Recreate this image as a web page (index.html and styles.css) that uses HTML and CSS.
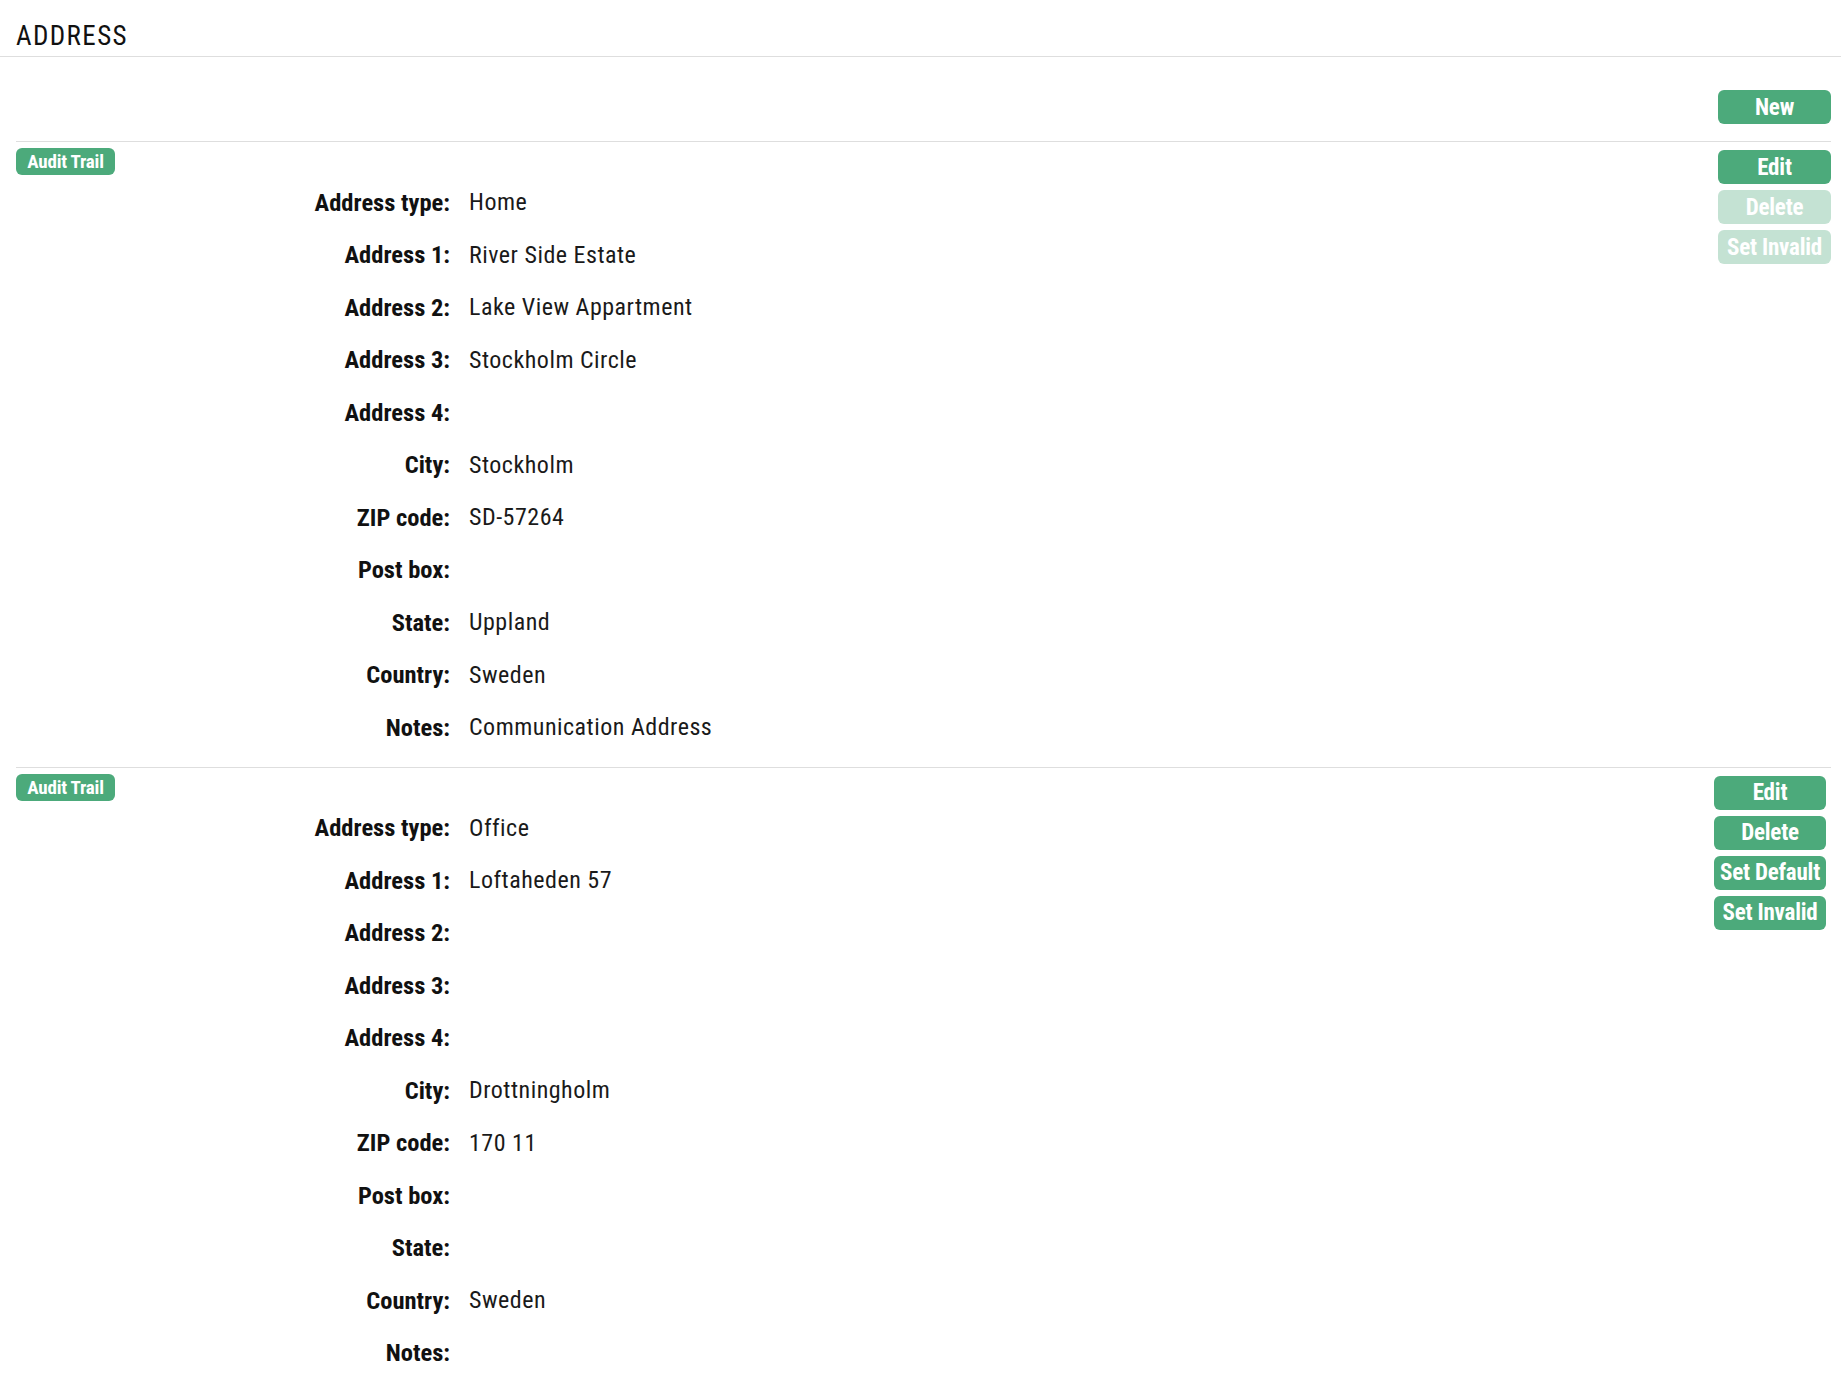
FILE: index.html
```html
<!DOCTYPE html>
<html lang="en">
<head>
    <meta charset="UTF-8">
    <meta name="viewport" content="width=device-width, initial-scale=1.0">
    <title>Address</title>
    <link rel="stylesheet" href="styles.css">
</head>
<body>
    <header class="page-head">
        <h1>ADDRESS</h1>
    </header>

    <div class="container">
        <div class="toolbar">
            <button type="button" class="btn">New</button>
        </div>

        <!-- Default address -->
        <section class="address">
            <div class="address-main">
                <button type="button" class="btn btn-small">Audit Trail</button>
                <dl class="fields">
                    <dt>Address type:</dt><dd>Home</dd>
                    <dt>Address 1:</dt><dd>River Side Estate</dd>
                    <dt>Address 2:</dt><dd>Lake View Appartment</dd>
                    <dt>Address 3:</dt><dd>Stockholm Circle</dd>
                    <dt>Address 4:</dt><dd></dd>
                    <dt>City:</dt><dd>Stockholm</dd>
                    <dt>ZIP code:</dt><dd>SD-57264</dd>
                    <dt>Post box:</dt><dd></dd>
                    <dt>State:</dt><dd>Uppland</dd>
                    <dt>Country:</dt><dd>Sweden</dd>
                    <dt>Notes:</dt><dd>Communication Address</dd>
                </dl>
            </div>
            <div class="actions">
                <button type="button" class="btn">Edit</button>
                <button type="button" class="btn" disabled>Delete</button>
                <button type="button" class="btn" disabled>Set Invalid</button>
            </div>
        </section>

        <section class="address">
            <div class="address-main">
                <button type="button" class="btn btn-small">Audit Trail</button>
                <dl class="fields">
                    <dt>Address type:</dt><dd>Office</dd>
                    <dt>Address 1:</dt><dd>Loftaheden 57</dd>
                    <dt>Address 2:</dt><dd></dd>
                    <dt>Address 3:</dt><dd></dd>
                    <dt>Address 4:</dt><dd></dd>
                    <dt>City:</dt><dd>Drottningholm</dd>
                    <dt>ZIP code:</dt><dd>170 11</dd>
                    <dt>Post box:</dt><dd></dd>
                    <dt>State:</dt><dd></dd>
                    <dt>Country:</dt><dd>Sweden</dd>
                    <dt>Notes:</dt><dd></dd>
                </dl>
            </div>
            <div class="actions actions-narrow">
                <button type="button" class="btn">Edit</button>
                <button type="button" class="btn">Delete</button>
                <button type="button" class="btn">Set Default</button>
                <button type="button" class="btn">Set Invalid</button>
            </div>
        </section>
    </div>
</body>
</html>
```
FILE: styles.css
```css
/* Global styles */
body {
    font-family: "Roboto Condensed", Roboto, sans-serif;
    color: #111;
    background-color: #fff;
    margin: 0;
    padding: 0;
}

.page-head {
    height: 56px;
    border-bottom: 1px solid #dedede;
    padding: 0 16px;
    display: flex;
    align-items: flex-end;
}

h1 {
    margin: 0 0 4px;
    font-size: 27px;
    font-weight: 400;
    letter-spacing: 1.4px;
    color: #111;
}

.container {
    padding: 0 10px 0 16px;
}

.toolbar {
    display: flex;
    justify-content: flex-end;
    padding: 33px 0 17px;
}

/* Buttons */
.btn {
    font-family: inherit;
    font-size: 23px;
    font-weight: 700;
    color: #fff;
    background-color: #4caa7b;
    border: none;
    border-radius: 6px;
    height: 34px;
    min-width: 113px;
    padding: 0 8px;
    cursor: pointer;
    letter-spacing: -0.2px;
}

.btn:disabled {
    background-color: #c4e2d3;
    cursor: default;
}

.btn-small {
    font-size: 19px;
    height: 27px;
    min-width: 99px;
    padding: 0 10px;
    border-radius: 6px;
}

/* Address blocks */
.address {
    display: flex;
    border-top: 1px solid #dedede;
    padding: 6px 0 13px;
}

.address-main {
    flex: 1;
}

.fields {
    display: grid;
    grid-template-columns: 434px 1fr;
    grid-auto-rows: 52.5px;
    column-gap: 19px;
    margin: 1px 0 0;
}

.fields dt,
.fields dd {
    margin: 0;
    display: flex;
    align-items: center;
    font-size: 24.5px;
}

.fields dt {
    justify-content: flex-end;
    font-weight: 700;
}

.fields dd {
    font-weight: 400;
    font-size: 24px;
    letter-spacing: 0.5px;
    color: #1a1a1a;
}

.actions {
    display: flex;
    flex-direction: column;
    gap: 6px;
    padding-top: 2px;
}

.actions-narrow {
    margin-right: 5px;
}

.actions-narrow .btn {
    min-width: 112px;
    padding: 0 4px;
}
```
